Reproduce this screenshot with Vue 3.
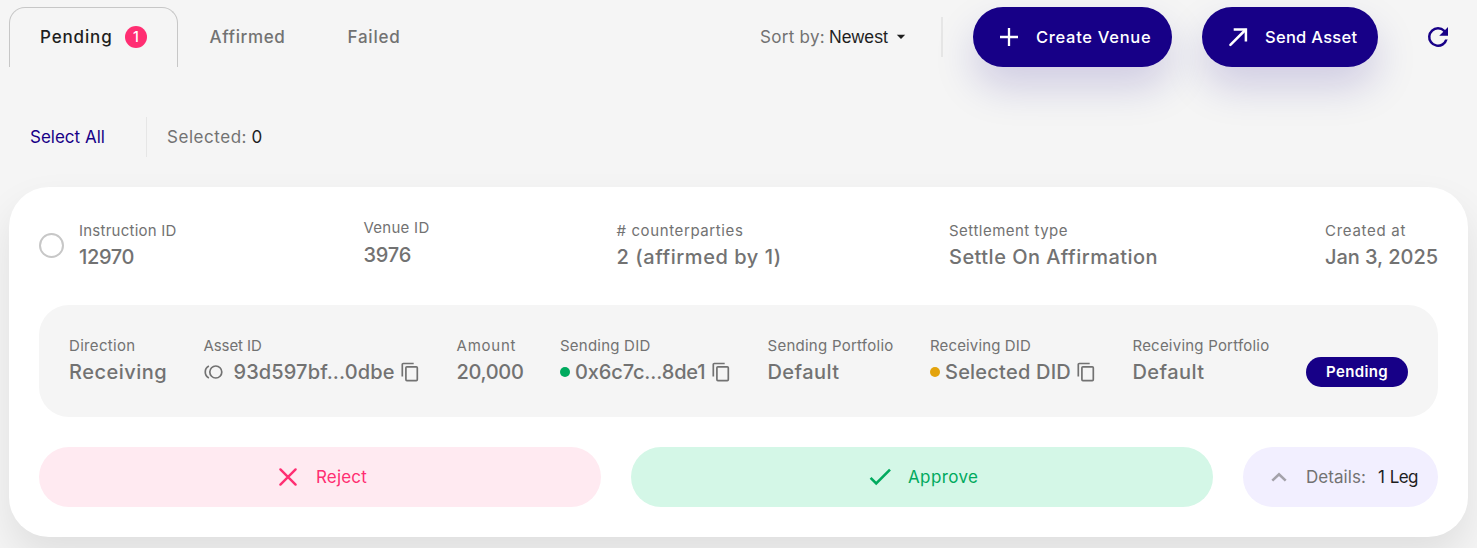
<script setup>
// lt / vt: letter-spacing of a field's label and value, in px
const summary = [
  { label: 'Instruction ID', lt: 0.24, value: '12970', vt: -0.37 },
  { label: 'Venue ID', lt: 0.26, value: '3976', vt: -0.2, raised: true },
  { label: '# counterparties', lt: 0.61, value: '2 (affirmed by 1)', vt: 0.56 },
  { label: 'Settlement type', lt: 0.49, value: 'Settle On Affirmation', vt: 0.47 },
  { label: 'Created at', lt: 0.71, value: 'Jan 3, 2025', vt: -0.04 },
]
const leg = [
  { label: 'Direction', lt: 0.33, value: 'Receiving', vt: 0.5 },
  { label: 'Asset ID', lt: -0.1, value: '93d597bf...0dbe', vt: 0.11, asset: true, copy: true },
  { label: 'Amount', lt: 0.78, value: '20,000', vt: -0.33 },
  { label: 'Sending DID', lt: 0.22, value: '0x6c7c...8de1', vt: -0.13, dot: 'green', copy: true },
  { label: 'Sending Portfolio', lt: 0.26, value: 'Default', vt: 0.43 },
  { label: 'Receiving DID', lt: 0.14, value: 'Selected DID', vt: 0.22, dot: 'amber', copy: true },
  { label: 'Receiving Portfolio', lt: 0.22, value: 'Default', vt: 0.43 },
]
const track = (n) => ({ letterSpacing: n + 'px' })
</script>

<template>
  <main class="page">
    <header class="topbar">
      <nav class="tabs">
        <button class="tab active"><span class="t-pending">Pending</span><span class="count">1</span></button>
        <button class="tab t-affirmed">Affirmed</button>
        <button class="tab t-failed">Failed</button>
      </nav>
      <div class="sort">
        <span class="sort-label">Sort by:</span><span class="sort-value">Newest</span>
        <svg class="caret" width="10" height="6" viewBox="0 0 10 6"><path d="M.8.8h8.4L5 5z" fill="#1e1e1e" /></svg>
      </div>
      <i class="rule"></i>
      <button class="primary create">
        <svg width="24" height="24" viewBox="0 0 24 24"><path d="M12 3v18M3 12h18" fill="none" stroke="#fff" stroke-width="2.3" /></svg>
        <span>Create Venue</span>
      </button>
      <button class="primary send">
        <svg width="24" height="24" viewBox="0 0 24 24"><path d="M4.4 19.9 19.3 5" fill="none" stroke="#fff" stroke-width="2.5" stroke-linecap="round" /><path d="M7.7 4.4h12.2v12.2" fill="none" stroke="#fff" stroke-width="2.5" /></svg>
        <span>Send Asset</span>
      </button>
      <button class="refresh">
        <svg width="30" height="30" viewBox="0 0 24 24"><path d="M17.65 6.35A7.96 7.96 0 0 0 12 4a8 8 0 1 0 7.73 10h-2.08A6 6 0 1 1 12 6c1.66 0 3.14.69 4.22 1.78L13 11h7V4z" fill="#170087" /></svg>
      </button>
    </header>

    <div class="selection">
      <a class="select-all">Select All</a><i class="rule thin"></i>
      <span class="selected">Selected:</span><span class="zero">0</span>
    </div>

    <section class="card">
      <div class="summary">
        <span class="radio"></span>
        <div v-for="f in summary" :key="f.label" class="field" :class="{ raised: f.raised }">
          <div class="label" :style="track(f.lt)">{{ f.label }}</div>
          <div class="value"><span :style="track(f.vt)">{{ f.value }}</span></div>
        </div>
      </div>

      <div class="leg">
        <div v-for="f in leg" :key="f.label" class="field">
          <div class="label" :style="track(f.lt)">{{ f.label }}</div>
          <div class="value">
            <svg v-if="f.asset" class="asset" width="20" height="16" viewBox="0 0 20 16" fill="none" stroke="#727272" stroke-width="1.7"><circle cx="11.8" cy="8" r="6" /><path d="M4.9 2.1a6.6 6.6 0 0 0 0 11.8" /></svg>
            <i v-if="f.dot" class="dot" :class="f.dot"></i>
            <span :style="track(f.vt)">{{ f.value }}</span>
            <svg v-if="f.copy" class="copy" width="18" height="20" viewBox="0 0 18 20" fill="none" stroke="#727272" stroke-width="1.7"><path d="M1.3 14.6V2.5a1 1 0 0 1 1-1h10.4" /><rect x="4.9" y="4.8" width="11.4" height="13.8" rx="1" /></svg>
          </div>
        </div>
        <span class="status">Pending</span>
      </div>

      <div class="actions">
        <button class="action reject">
          <svg width="20" height="20" viewBox="0 0 20 20"><path d="m2.4 2.4 15.2 15.2m0-15.2L2.4 17.6" fill="none" stroke="currentColor" stroke-width="2.4" stroke-linecap="round" /></svg>
          <span>Reject</span>
        </button>
        <button class="action approve">
          <svg width="24" height="20" viewBox="0 0 24 20"><path d="m2.6 10.9 5.6 5.6L22 2.6" fill="none" stroke="currentColor" stroke-width="2.6" /></svg>
          <span>Approve</span>
        </button>
        <button class="action details">
          <svg width="16" height="10" viewBox="0 0 16 10"><path d="m1.3 8.6 6.7-6.4 6.7 6.4" fill="none" stroke="#a4a2aa" stroke-width="2.6" /></svg>
          <span class="d-label">Details:</span><span class="d-value">1 Leg</span>
        </button>
      </div>
    </section>
  </main>
</template>

<style>
body { background: #f5f5f5; overflow: hidden; }
</style>

<style scoped>
* { box-sizing: border-box; }
.page { height: 548px; overflow: hidden; padding: 7px 9px 0; font: 400 17px/26px Inter, sans-serif; color: #727272; background: #f5f5f5; }
button { border: 0; background: none; padding: 0; margin: 0; font: inherit; color: inherit; white-space: nowrap; }
svg { display: block; flex: none; }
.topbar { display: flex; height: 60px; align-items: center; }
.tabs { display: flex; width: 751px; height: 60px; }
.tab { display: flex; align-items: center; font-weight: 500; }
.tab.active { width: 169px; padding: 0 0 1px 30px; border: 1px solid #c7c7c7; border-bottom: 0; border-radius: 16px 16px 0 0; color: #1e1e1e; }
.t-pending { width: 85px; text-align: left; letter-spacing: .85px; }
.count { width: 22px; height: 22px; border-radius: 50%; background: #ff2e72; color: #fff; font-size: 14px; line-height: 22px; text-align: center; }
.t-affirmed { width: 138px; margin-left: 31.5px; letter-spacing: .63px; }
.t-failed { letter-spacing: .77px; }
.sort { display: flex; align-items: center; width: 181px; }
.sort-label { width: 69px; letter-spacing: .29px; }
.sort-value { width: 67px; font-family: "Liberation Sans", sans-serif; font-size: 17.6px; letter-spacing: .05px; color: #1e1e1e; }
.rule { width: 2px; height: 40px; background: #e6e6e6; }
.primary { display: flex; align-items: center; height: 60px; padding-left: 24px; border-radius: 30px; background: #170087; color: #fff; font-size: 16.5px; font-weight: 500; box-shadow: 0 20px 40px rgba(23, 0, 135, .17); }
.primary span { margin-left: 15px; }
.create { width: 199px; margin-left: 30px; letter-spacing: .7px; }
.send { width: 176px; margin-left: 30px; letter-spacing: .27px; }
.refresh { margin-left: 45px; }
.selection { display: flex; align-items: center; height: 40px; margin-top: 50px; padding-left: 21px; }
.select-all { width: 116px; color: #170087; }
.rule.thin { width: 1px; margin-right: 20px; }
.selected { width: 84.5px; letter-spacing: .54px; }
.zero { color: #1e1e1e; }
.card { width: 1459px; height: 350px; margin-top: 30px; padding: 30px; border-radius: 40px; background: #fff; box-shadow: 0 20px 40px rgba(0, 0, 0, .09); }
.summary { display: grid; grid-template-columns: 40px 284.5px 253px 332.5px 376px auto; height: 88px; padding-top: 3px; align-items: start; }
.radio { width: 25px; height: 25px; margin-top: 13px; border: 2px solid #c7c7c7; border-radius: 50%; }
.field { white-space: nowrap; }
.label { height: 22px; font-size: 15px; line-height: 22px; }
.value { display: flex; align-items: center; height: 30px; font-size: 20px; font-weight: 500; line-height: 30px; }
.raised { margin-top: -3px; }
.raised .value { padding-top: 2px; }
.leg { display: grid; grid-template-columns: 134.5px 253px 103.5px 207.5px 162.5px 202.5px 173.5px 102px; height: 112px; padding: 30px 0 0 30px; border-radius: 30px; background: #f5f5f5; align-items: start; }
.asset { margin-right: 10px; }
.copy { margin-left: 6px; }
.dot { width: 10px; height: 10px; margin-right: 5px; border-radius: 50%; }
.green { background: #00aa5e; }
.amber { background: #e3a30c; }
.status { height: 30px; margin-top: 22px; border-radius: 15px; background: #170087; color: #fff; font-size: 15px; font-weight: 600; line-height: 30px; letter-spacing: .36px; text-align: center; }
.actions { display: grid; grid-template-columns: 562px 582px 195px; gap: 30px; margin-top: 30px; }
.action { display: flex; align-items: center; height: 60px; border-radius: 30px; }
.reject { padding-left: 239px; background: #ffeaf1; color: #ff2e72; letter-spacing: .18px; }
.reject span { margin-left: 18px; }
.approve { padding-left: 237px; background: #d4f7e7; color: #00aa5e; letter-spacing: .38px; }
.approve span { margin-left: 16px; }
.details { padding-left: 28px; background: #f2efff; }
.d-label { width: 72px; margin-left: 19px; text-align: left; letter-spacing: .06px; }
.d-value { color: #1e1e1e; letter-spacing: -.53px; word-spacing: 1px; }
</style>
